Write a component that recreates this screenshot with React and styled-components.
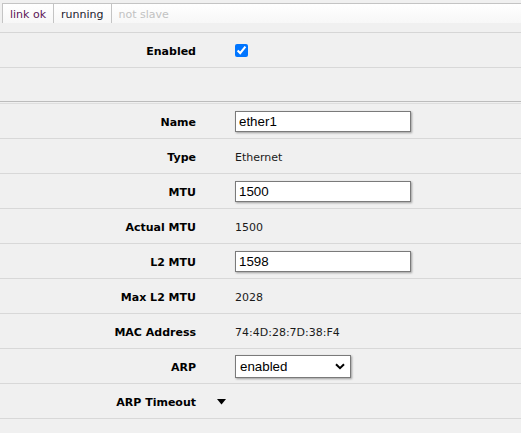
import React from 'react';
import styled, { createGlobalStyle } from 'styled-components';

const GlobalStyle = createGlobalStyle`
  html, body {
    margin: 0;
    padding: 0;
    background: #f0f0f0;
  }
  body {
    font-family: "DejaVu Sans", Verdana, sans-serif;
    font-size: 11px;
    color: #000;
  }
`;

const Page = styled.div`
  width: 521px;
  height: 433px;
  overflow: hidden;
  background: #f0f0f0;
`;

const StatusBar = styled.div`
  display: flex;
  padding: 3px 0 0 2px;
  height: 20px;
  margin-bottom: 9px;
`;

const StatusTab = styled.div`
  flex: ${(p) => (p.$grow ? 1 : 'none')};
  height: 20px;
  line-height: 21px;
  padding: 0 7px;
  border-top: 1px solid #c4c4c4;
  border-left: 1px solid #c4c4c4;
  box-sizing: border-box;
  background: linear-gradient(#ffffff, #f7f7f7);
  color: ${(p) => p.$color};
  white-space: nowrap;
`;

const Form = styled.div`
  border-top: 1px solid #d6d6d6;
`;

const Row = styled.div`
  display: grid;
  grid-template-columns: 197px 38px 1fr;
  align-items: center;
  height: ${(p) => p.$h || 34}px;
  border-bottom: 1px solid ${(p) => p.$border || '#d8d8d8'};
`;

const Divider = styled.div`
  margin-top: 1px;
  border-top: 1px solid #dedede;
`;

const Label = styled.div`
  text-align: right;
  font-weight: bold;
  font-size: 11px;
  padding-right: 1px;
  padding-top: 2px;
  white-space: nowrap;
`;

const Toggle = styled.div`
  display: flex;
  align-items: center;
  padding-left: 20px;
  padding-top: 2px;
`;

const Value = styled.div`
  font-size: 11px;
  color: #1a1a1a;
  display: flex;
  align-items: center;
  padding-top: ${(p) => (p.$text ? 2 : 0)}px;
`;

const TextInput = styled.input`
  width: 176px;
  height: 21px;
  box-sizing: border-box;
  border: 1px solid #7a7a7a;
  box-shadow: 1px 1px 2px rgba(0, 0, 0, 0.35);
  background: #fff;
  font-family: "Liberation Sans", Arial, sans-serif;
  font-size: 13.33px;
  color: #000;
  padding: 0 3px;
  margin: 0;
  outline: none;
`;

const Check = styled.input`
  width: 13px;
  height: 13px;
  margin: 0;
  accent-color: #0075ff;
`;

const SelectWrap = styled.div`
  position: relative;
  width: 116px;
  height: 23px;
`;

const Select = styled.select`
  appearance: none;
  width: 116px;
  height: 23px;
  box-sizing: border-box;
  border: 1px solid #7a7a7a;
  box-shadow: 1px 1px 2px rgba(0, 0, 0, 0.35);
  background: #fff;
  font-family: "Liberation Sans", Arial, sans-serif;
  font-size: 13.33px;
  color: #000;
  padding: 0 4px;
  margin: 0;
  outline: none;
  border-radius: 0;
`;

const Chevron = styled.svg`
  position: absolute;
  right: 6px;
  top: 8px;
  pointer-events: none;
`;

const rows = [
  { label: 'Name', input: 'ether1' },
  { label: 'Type', text: 'Ethernet' },
  { label: 'MTU', input: '1500' },
  { label: 'Actual MTU', text: '1500' },
  { label: 'L2 MTU', input: '1598' },
  { label: 'Max L2 MTU', text: '2028' },
  { label: 'MAC Address', text: '74:4D:28:7D:38:F4' },
];

export default function App() {
  return (
    <Page>
      <GlobalStyle />
      <StatusBar>
        <StatusTab $color="#5c1456">link ok</StatusTab>
        <StatusTab $color="#1c1a2e">running</StatusTab>
        <StatusTab $color="#c2c2c2" $grow>not slave</StatusTab>
      </StatusBar>

      <Form>
        <Row>
          <Label>Enabled</Label>
          <span />
          <Value>
            <Check type="checkbox" defaultChecked />
          </Value>
        </Row>
        <Row $h={33} $border="#bcbcbc" />
        <Divider />

        {rows.map((r) => (
          <Row key={r.label}>
            <Label>{r.label}</Label>
            <span />
            <Value $text={!r.input}>
              {r.input ? <TextInput defaultValue={r.input} /> : r.text}
            </Value>
          </Row>
        ))}

        <Row>
          <Label>ARP</Label>
          <span />
          <Value>
            <SelectWrap>
              <Select defaultValue="enabled">
                <option value="enabled">enabled</option>
                <option value="disabled">disabled</option>
                <option value="proxy-arp">proxy-arp</option>
                <option value="reply-only">reply-only</option>
              </Select>
              <Chevron width="10" height="7" viewBox="0 0 10 7">
                <path d="M1 1.2 L5 5.2 L9 1.2" fill="none" stroke="#000" strokeWidth="2" />
              </Chevron>
            </SelectWrap>
          </Value>
        </Row>

        <Row>
          <Label>ARP Timeout</Label>
          <Toggle>
            <svg width="9" height="6" viewBox="0 0 9 6">
              <polygon points="0,0 9,0 4.5,5.5" fill="#000" />
            </svg>
          </Toggle>
          <span />
        </Row>
      </Form>
    </Page>
  );
}
